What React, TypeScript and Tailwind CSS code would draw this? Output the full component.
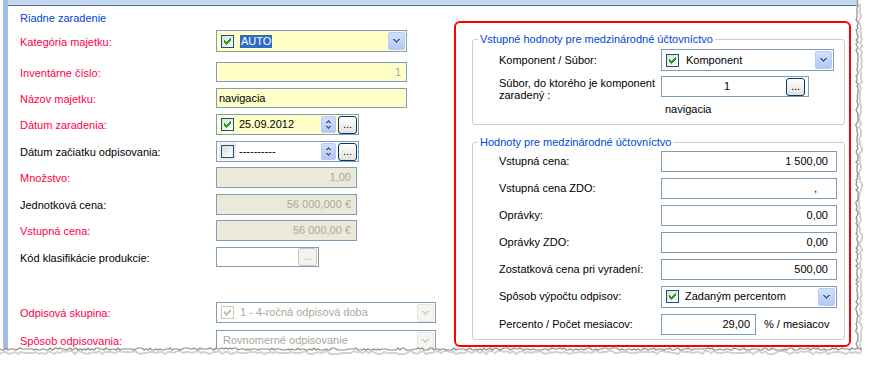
import React from 'react';

const rnd = (i: number) => {
  const v = Math.sin(i * 12.9898 + 4.1) * 43758.5453;
  return v - Math.floor(v);
};

// xp style pixel checkmark
function Check({ checked = true, disabled = false }: { checked?: boolean; disabled?: boolean }) {
  const cols = [2, 3, 4, 3, 2, 1, 0];
  return (
    <span
      className={`flex h-[13px] w-[13px] shrink-0 items-center justify-center border ${
        disabled ? 'border-[#c9c7ba] bg-white' : 'border-[#1c5180] bg-linear-to-br from-[#dcdcd7] to-white'
      }`}
    >
      {checked && (
        <svg width="7" height="7" viewBox="0 0 7 7" shapeRendering="crispEdges">
          {cols.map((y, x) => (
            <rect key={x} x={x} y={y} width="1" height="3" fill={disabled ? '#c5c2b2' : '#21a121'} />
          ))}
        </svg>
      )}
    </span>
  );
}

function DropBtn({ disabled = false }: { disabled?: boolean }) {
  const c = disabled ? '#cdcbc0' : '#4d6185';
  return (
    <span
      className={`flex h-[18px] w-[17px] shrink-0 items-center justify-center rounded-[2px] border ${
        disabled ? 'border-[#e6e5de] bg-[#f5f4f0]' : 'border-[#b7cbf6] bg-linear-to-b from-[#d3e0fd] to-[#b3c8f7]'
      }`}
    >
      <svg width="7" height="4" viewBox="0 0 7 4" shapeRendering="crispEdges">
        <rect x="0" y="0" width="2" height="1" fill={c} />
        <rect x="5" y="0" width="2" height="1" fill={c} />
        <rect x="1" y="1" width="2" height="1" fill={c} />
        <rect x="4" y="1" width="2" height="1" fill={c} />
        <rect x="2" y="2" width="3" height="1" fill={c} />
        <rect x="3" y="3" width="1" height="1" fill={c} />
      </svg>
    </span>
  );
}

function Spin() {
  const c = '#4d6185';
  return (
    <span className="flex h-[17px] w-[15px] shrink-0 flex-col items-center justify-center gap-[3px] rounded-[2px] border border-[#b7cbf6] bg-linear-to-b from-[#d3e0fd] to-[#b3c8f7]">
      <svg width="7" height="3" viewBox="0 0 7 3" shapeRendering="crispEdges">
        <rect x="3" y="0" width="1" height="1" fill={c} />
        <rect x="2" y="1" width="3" height="1" fill={c} />
        <rect x="1" y="2" width="2" height="1" fill={c} />
        <rect x="4" y="2" width="2" height="1" fill={c} />
      </svg>
      <svg width="7" height="3" viewBox="0 0 7 3" shapeRendering="crispEdges">
        <rect x="1" y="0" width="2" height="1" fill={c} />
        <rect x="4" y="0" width="2" height="1" fill={c} />
        <rect x="2" y="1" width="3" height="1" fill={c} />
        <rect x="3" y="2" width="1" height="1" fill={c} />
      </svg>
    </span>
  );
}

function Dots({ disabled = false }: { disabled?: boolean }) {
  return (
    <span
      className={`flex h-[18px] w-[19px] shrink-0 items-end justify-center rounded-[3px] border pb-[3px] leading-none ${
        disabled
          ? 'h-[16px] w-[18px] border-[#c9c7ba] bg-[#f4f3ee] text-[#aca899]'
          : 'border-[#003c74] bg-linear-to-b from-white to-[#e3e2da] text-black'
      }`}
    >
      ...
    </span>
  );
}

function Label({ text, red = false, className = '' }: { text: string; red?: boolean; className?: string }) {
  return <div className={`${red ? 'text-[#ff0049]' : 'text-black'} ${className}`}>{text}</div>;
}

function FormRow({ label, red, mt, children }: { label: string; red?: boolean; mt: string; children: React.ReactNode }) {
  return (
    <div className={`flex items-center ${mt}`}>
      <Label text={label} red={red} className="w-[196px] shrink-0 pt-[2px]" />
      {children}
    </div>
  );
}

function NumBox({ value, w = 'w-[176px]', pr = 'pr-[8px]' }: { value: string; w?: string; pr?: string }) {
  return (
    <div className={`flex h-[21px] ${w} items-center justify-end border border-[#7f9db9] bg-white ${pr}`}>{value}</div>
  );
}

function RightRow({ label, children }: { label: string; children: React.ReactNode }) {
  return (
    <div className="flex items-center">
      <div className="w-[162px] shrink-0">{label}</div>
      {children}
    </div>
  );
}

function TornEdges() {
  const bottom: string[] = [];
  for (let x = 0; x <= 862; x += 2) bottom.push(`${x},${348 + Math.round(rnd(x) * 2.4)}`);
  const bottom2: string[] = [];
  for (let x = 0; x <= 862; x += 3) bottom2.push(`${x},${351 + Math.round(rnd(x + 7) * 3)}`);
  const right: string[] = [];
  for (let y = 0; y <= 349; y += 2) right.push(`${856 + Math.round(rnd(y + 3) * 2.4)},${y}`);
  const right2: string[] = [];
  for (let y = 4; y <= 352; y += 3) right2.push(`${859 + Math.round(rnd(y + 11) * 3)},${y}`);
  return (
    <svg className="pointer-events-none absolute inset-0" width="870" height="366">
      <polyline points={bottom2.join(' ')} fill="none" stroke="#d2d2d2" strokeWidth="2" />
      <polyline points={right2.join(' ')} fill="none" stroke="#d2d2d2" strokeWidth="2" />
      <polyline points={bottom.join(' ')} fill="none" stroke="#8a8a8a" strokeWidth="1.2" />
      <polyline points={right.join(' ')} fill="none" stroke="#8a8a8a" strokeWidth="1.2" />
    </svg>
  );
}

export default function App() {
  return (
    <div className="relative h-[366px] w-[870px] overflow-hidden bg-white font-['Liberation_Sans',Arial,sans-serif] text-[11px] leading-[13px] text-black">
      <div className="flex h-[349px] w-[857px] overflow-hidden">
        <div className="w-[3px] shrink-0" />
        <div className="w-[5px] shrink-0 bg-[#a3bde6]" />
        <div className="flex flex-1 flex-col">
          <div className="h-[5px] shrink-0 bg-[#c6d8f2]" />
          <div className="h-[1px] shrink-0 bg-[#5d6f8b]" />

          <div className="flex flex-1 pl-[12px]">
            {/* left form */}
            <div className="flex w-[434px] shrink-0 flex-col">
              <div className="mt-[6px] h-[13px] text-[#0046d5]">Riadne zaradenie</div>

              <FormRow label="Kategória majetku:" red mt="mt-[5px]">
                <div className="flex h-[22px] w-[191px] items-center border border-[#7f9db9] bg-[#ffffc8] pr-[1px] pl-[4px]">
                  <Check />
                  <span className="ml-[6px] bg-[#316ac5] px-[1px] text-white">AUTO</span>
                  <span className="flex-1" />
                  <DropBtn />
                </div>
              </FormRow>

              <FormRow label="Inventárne číslo:" red mt="mt-[10px]">
                <div className="flex h-[20px] w-[191px] items-center justify-end border border-[#7f9db9] bg-[#ffffc8] pr-[5px] text-[#a3a3a3]">
                  1
                </div>
              </FormRow>

              <FormRow label="Názov majetku:" red mt="mt-[6px]">
                <div className="flex h-[20px] w-[191px] items-center border border-[#7f9db9] bg-[#ffffc8] pl-[2px]">
                  navigacia
                </div>
              </FormRow>

              <FormRow label="Dátum zaradenia:" red mt="mt-[6px]">
                <div className="flex h-[21px] w-[143px] items-center border border-[#7f9db9] bg-[#ffffc8] pr-[1px] pl-[4px]">
                  <Check />
                  <span className="ml-[5px]">25.09.2012</span>
                  <span className="flex-1" />
                  <Spin />
                  <span className="ml-[2px]">
                    <Dots />
                  </span>
                </div>
              </FormRow>

              <FormRow label="Dátum začiatku odpisovania:" mt="mt-[6px]">
                <div className="flex h-[21px] w-[143px] items-center border border-[#7f9db9] bg-white pr-[1px] pl-[2px]">
                  <span className="flex h-[17px] w-[17px] items-center justify-center bg-[#efeee6]">
                    <Check checked={false} />
                  </span>
                  <span className="ml-[3px]">----------</span>
                  <span className="flex-1" />
                  <Spin />
                  <span className="ml-[2px]">
                    <Dots />
                  </span>
                </div>
              </FormRow>

              <FormRow label="Množstvo:" red mt="mt-[5px]">
                <div className="flex h-[21px] w-[141px] items-center justify-end border border-[#7f9db9] bg-[#ebe9d8] pr-[5px] text-[#aca899]">
                  1,00
                </div>
              </FormRow>

              <FormRow label="Jednotková cena:" mt="mt-[6px]">
                <div className="flex h-[21px] w-[141px] items-center justify-end border border-[#7f9db9] bg-[#ebe9d8] pr-[5px] text-[#aca899]">
                  56 000,000 €
                </div>
              </FormRow>

              <FormRow label="Vstupná cena:" red mt="mt-[5px]">
                <div className="flex h-[21px] w-[141px] items-center justify-end border border-[#7f9db9] bg-[#ebe9d8] pr-[5px] text-[#aca899]">
                  56 000,00 €
                </div>
              </FormRow>

              <FormRow label="Kód klasifikácie produkcie:" mt="mt-[6px]">
                <div className="flex h-[20px] w-[103px] items-center justify-end border border-[#7f9db9] bg-white pr-[1px]">
                  <Dots disabled />
                </div>
              </FormRow>

              <FormRow label="Odpisová skupina:" red mt="mt-[35px]">
                <div className="flex h-[21px] w-[220px] items-center border border-[#7f9db9] bg-white pr-[1px] pl-[4px] text-[#aca899]">
                  <Check disabled />
                  <span className="ml-[6px]">1 - 4-ročná odpisová doba</span>
                  <span className="flex-1" />
                  <DropBtn disabled />
                </div>
              </FormRow>

              <FormRow label="Spôsob odpisovania:" red mt="mt-[7px]">
                <div className="flex h-[21px] w-[220px] items-center border border-[#7f9db9] bg-white pr-[1px] pl-[6px] text-[#aca899]">
                  <span>Rovnomerné odpisovanie</span>
                  <span className="flex-1" />
                  <DropBtn disabled />
                </div>
              </FormRow>
            </div>

            {/* highlighted panel */}
            <div className="mt-[15px] flex h-[326px] w-[397px] shrink-0 flex-col rounded-[6px] border-2 border-[#ff0000] pt-[16px] pr-[4px] pb-[5px] pl-[16px]">
              <div className="relative h-[86px] rounded-[3px] border border-[#d0d0bf] pt-[9px] pl-[26px]">
                <span className="absolute -top-[7px] left-[5px] bg-white px-[2px] text-[#0046d5]">
                  Vstupné hodnoty pre medzinárodné účtovníctvo
                </span>
                <RightRow label="Komponent / Súbor:">
                  <div className="flex h-[22px] w-[173px] items-center border border-[#7f9db9] bg-white pr-[1px] pl-[4px]">
                    <Check />
                    <span className="ml-[7px]">Komponent</span>
                    <span className="flex-1" />
                    <DropBtn />
                  </div>
                </RightRow>
                <div className="mt-[5px] flex">
                  <div className="w-[162px] shrink-0 pt-[1px] leading-[12px]">
                    Súbor, do ktorého je komponent
                    <br />
                    zaradený :
                  </div>
                  <div className="flex flex-col">
                    <div className="flex h-[21px] w-[148px] items-center border border-[#7f9db9] bg-white pr-[3px]">
                      <span className="flex-1 pl-[6px] text-center">1</span>
                      <Dots />
                    </div>
                    <div className="mt-[6px] pl-[4px]">navigacia</div>
                  </div>
                </div>
              </div>

              <div className="relative mt-[17px] flex h-[199px] flex-col gap-[6px] rounded-[3px] border border-[#d0d0bf] pt-[8px] pl-[26px]">
                <span className="absolute -top-[7px] left-[5px] bg-white px-[2px] text-[#0046d5]">
                  Hodnoty pre medzinárodné účtovníctvo
                </span>
                <RightRow label="Vstupná cena:">
                  <NumBox value="1 500,00" />
                </RightRow>
                <RightRow label="Vstupná cena ZDO:">
                  <NumBox value="," pr="pr-[19px]" />
                </RightRow>
                <RightRow label="Oprávky:">
                  <NumBox value="0,00" />
                </RightRow>
                <RightRow label="Oprávky ZDO:">
                  <NumBox value="0,00" />
                </RightRow>
                <RightRow label="Zostatková cena pri vyradení:">
                  <NumBox value="500,00" />
                </RightRow>
                <RightRow label="Spôsob výpočtu odpisov:">
                  <div className="flex h-[22px] w-[176px] items-center border border-[#7f9db9] bg-white pr-[1px] pl-[4px]">
                    <Check />
                    <span className="ml-[6px]">Zadaným percentom</span>
                    <span className="flex-1" />
                    <DropBtn />
                  </div>
                </RightRow>
                <RightRow label="Percento / Počet mesiacov:">
                  <NumBox value="29,00" w="w-[95px]" pr="pr-[5px]" />
                  <span className="ml-[8px]">% / mesiacov</span>
                </RightRow>
              </div>
            </div>
          </div>
        </div>
      </div>
      <TornEdges />
    </div>
  );
}
